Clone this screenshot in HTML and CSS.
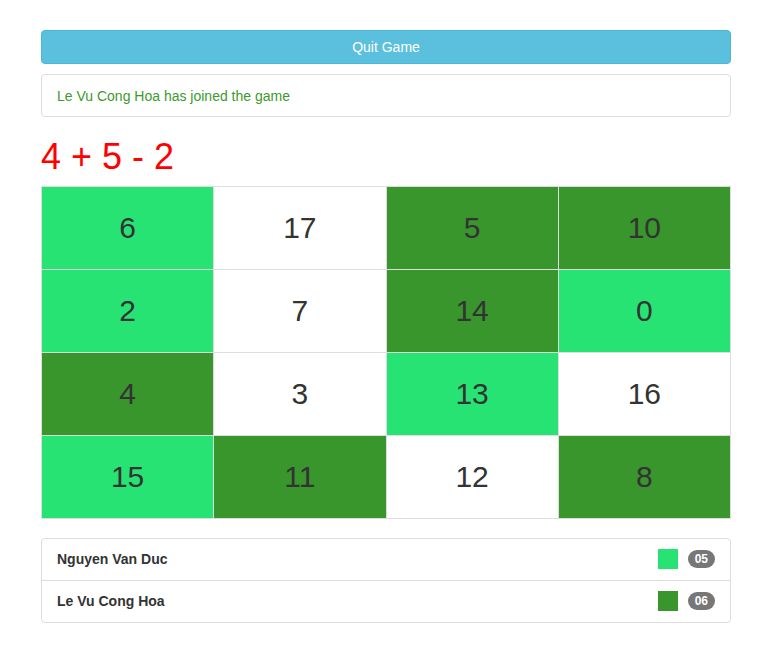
FILE: index.html
```html
<!DOCTYPE html>
<html>
<head>
<meta charset="utf-8">
<link rel="stylesheet" href="styles.css">
</head>
<body>
<div class="container">
  <button class="btn-quit">Quit Game</button>
  <div class="alert">Le Vu Cong Hoa has joined the game</div>
  <h1 class="equation">4 + 5 - 2</h1>
  <table class="board">
    <tr><td class="light">6</td><td>17</td><td class="dark">5</td><td class="dark">10</td></tr>
    <tr><td class="light">2</td><td>7</td><td class="dark">14</td><td class="light">0</td></tr>
    <tr><td class="dark">4</td><td>3</td><td class="light">13</td><td>16</td></tr>
    <tr><td class="light">15</td><td class="dark">11</td><td>12</td><td class="dark">8</td></tr>
  </table>
  <ul class="players">
    <li class="player"><span class="name">Nguyen Van Duc</span><span class="swatch light"></span><span class="badge">05</span></li>
    <li class="player"><span class="name">Le Vu Cong Hoa</span><span class="swatch dark"></span><span class="badge">06</span></li>
  </ul>
</div>
</body>
</html>
```
FILE: styles.css
```css
* { box-sizing: border-box; }
html, body { margin: 0; padding: 0; background: #fff; }
body {
  font-family: "Liberation Sans", Arial, sans-serif;
  font-size: 14px;
  line-height: 20px;
  color: #333;
}
.container {
  width: 690px;
  margin-left: 41px;
  padding-top: 30px;
  padding-bottom: 20px;
}
.btn-quit {
  display: block;
  width: 100%;
  height: 34px;
  padding: 6px 12px;
  font-family: inherit;
  font-size: 14px;
  line-height: 20px;
  color: #fff;
  background: #5bc0de;
  border: 1px solid #46b8da;
  border-radius: 4px;
}
.alert {
  margin-top: 10px;
  padding: 11px 15px 11px;
  height: 43px;
  border: 1px solid #ddd;
  border-radius: 4px;
  color: #3c9a2c;
  font-size: 14px;
  line-height: 20px;
}
.equation {
  margin: 20px 0 9px;
  font-size: 36px;
  line-height: 1.1;
  font-weight: 500;
  color: #ff0000;
}
.board {
  width: 100%;
  border-collapse: collapse;
  margin-bottom: 19px;
  table-layout: fixed;
}
.board td {
  border: 1px solid #ddd;
  height: 83px;
  text-align: center;
  vertical-align: middle;
  font-size: 30px;
  color: #333;
  padding: 0;
}
.light { background: #27e373; }
.dark { background: #38962d; }
.players {
  list-style: none;
  margin: 0;
  padding: 0;
  border: 1px solid #ddd;
  border-radius: 4px;
}
.player {
  display: flex;
  align-items: flex-start;
  padding: 10px 15px;
  height: 41px;
}
.player + .player {
  border-top: 1px solid #ddd;
  height: 42px;
}
.name {
  flex: 1;
  font-weight: bold;
  color: #333;
  line-height: 21px;
}
.swatch {
  width: 20px;
  height: 20px;
  margin-right: 10px;
}
.badge {
  display: inline-block;
  min-width: 10px;
  padding: 3px 7px;
  margin-top: 1px;
  font-size: 12px;
  font-weight: bold;
  line-height: 1;
  color: #fff;
  background: #777;
  border-radius: 10px;
}
```
